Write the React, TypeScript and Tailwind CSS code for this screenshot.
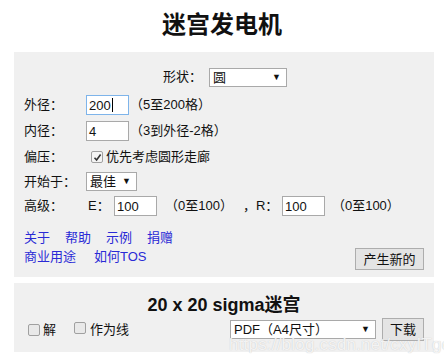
import React from 'react';

const font = { fontFamily: '"Liberation Sans", "Noto Sans CJK SC", sans-serif' };

const Box: React.FC<{ w: string; value: string; focus?: boolean }> = ({ w, value, focus }) => (
  <div
    className={`${w} h-[20px] bg-white border flex items-center pl-[2px] text-[13px] leading-none ${
      focus ? 'border-[#7eb4ea]' : 'border-[#a9a9a9]'
    }`}
  >
    {value}
    {focus && <span className="inline-block w-px h-[14px] bg-black ml-px" />}
  </div>
);

const Select: React.FC<{ w: string; value: string }> = ({ w, value }) => (
  <div className={`${w} h-[19px] bg-white border border-[#a9a9a9] flex items-center justify-between pl-[3px] pr-[5px] text-[13px] leading-none`}>
    <span>{value}</span>
    <span className="text-[9px]">▼</span>
  </div>
);

const Check: React.FC<{ checked?: boolean }> = ({ checked }) => (
  <span
    className={`inline-flex items-center justify-center w-[12px] h-[12px] rounded-[2px] border border-[#a0a0a0] ${
      checked ? 'bg-[#f4f4f4]' : 'bg-[#e9e9e9]'
    }`}
  >
    {checked && (
      <svg width="9" height="9" viewBox="0 0 9 9">
        <path d="M1.5 4.8 L3.6 7 L7.6 1.6" stroke="#333" strokeWidth="1.6" fill="none" />
      </svg>
    )}
  </span>
);

const Button: React.FC<{ label: string; w: string; h: string }> = ({ label, w, h }) => (
  <div className={`${w} ${h} flex items-center justify-center border border-[#adadad] bg-[#e4e4e4] text-[13px] leading-none`}>
    {label}
  </div>
);

export default function App() {
  return (
    <div className="relative w-[444px] h-[364px] bg-white text-[#111] text-[13px]" style={font}>
      <h1 className="h-[52px] flex items-center justify-center text-[24px] font-bold pb-[2px]">迷宫发电机</h1>

      <div className="mx-[14px] w-[420px] bg-[#f0f0f0] pl-[10px] pr-[10px] pt-[12px] pb-[7px]">
        <div className="h-[26px] flex items-center justify-center gap-[7px] pl-[2px]">
          <span>形状：</span>
          <Select w="w-[78px]" value="圆" />
        </div>

        <div className="mt-[2px] h-[26px] flex items-center">
          <span className="w-[62px]">外径：</span>
          <Box w="w-[43px]" value="200" focus />
          <span className="ml-[1px]">（5至200格）</span>
        </div>

        <div className="h-[26px] flex items-center">
          <span className="w-[62px]">内径：</span>
          <Box w="w-[43px]" value="4" />
          <span className="ml-[1px]">（3到外径-2格）</span>
        </div>

        <div className="h-[26px] flex items-center">
          <span className="w-[67px]">偏压：</span>
          <Check checked />
          <span className="ml-[3px]">优先考虑圆形走廊</span>
        </div>

        <div className="h-[23px] flex items-center">
          <span className="w-[62px]">开始于：</span>
          <Select w="w-[51px]" value="最佳" />
        </div>

        <div className="h-[26px] flex items-center">
          <span className="w-[64px]">高级：</span>
          <span className="w-[26px]">E：</span>
          <Box w="w-[43px]" value="100" />
          <span className="ml-[8px]">（0至100）</span>
          <span className="ml-[10px] w-[13px]">，</span>
          <span className="w-[26px]">R：</span>
          <Box w="w-[43px]" value="100" />
          <span className="ml-[7px]">（0至100）</span>
        </div>

        <div className="mt-[9px] flex justify-between items-end">
          <div className="text-[#2a2ad6] leading-[19px] pb-[4px]">
            <div>
              <span className="mr-[15px]">关于</span>
              <span className="mr-[15px]">帮助</span>
              <span className="mr-[15px]">示例</span>
              <span>捐赠</span>
            </div>
            <div>
              <span className="mr-[18px]">商业用途</span>
              <span>如何TOS</span>
            </div>
          </div>
          <Button label="产生新的" w="w-[69px]" h="h-[22px]" />
        </div>
      </div>

      <div className="mt-[6px] mx-[14px] w-[420px] bg-[#f0f0f0] pt-[12px] pb-[11px] pl-[14px] pr-[10px]">
        <div className="h-[20px] flex items-center justify-center text-[18px] font-bold pr-[4px]">20 x 20 sigma迷宫</div>
        <div className="mt-[3px] h-[23px] flex items-center">
          <Check />
          <span className="ml-[3px]">解</span>
          <span className="ml-[18px]">
            <Check />
          </span>
          <span className="ml-[4px]">作为线</span>
          <div className="ml-auto flex items-center gap-[6px]">
            <Select w="w-[146px]" value="PDF（A4尺寸）" />
            <Button label="下载" w="w-[42px]" h="h-[23px]" />
          </div>
        </div>
      </div>

      <div className="absolute left-[229px] top-[332px] text-[17px] text-white/80 tracking-[0.2px] pointer-events-none" style={{ textShadow: '0 0 1px #bbb' }}>
        https://blog.csdn.net/cxyITgc
      </div>
    </div>
  );
}
